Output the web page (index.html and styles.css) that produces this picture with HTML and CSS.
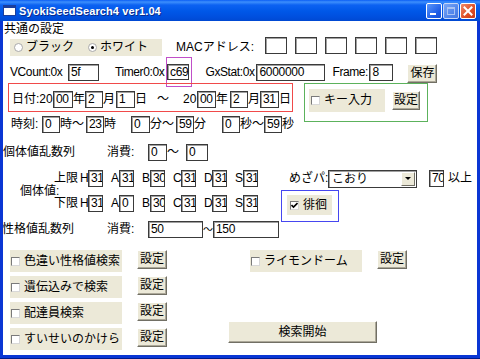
FILE: index.html
```html
<!DOCTYPE html>
<html lang="ja">
<head>
<meta charset="utf-8">
<title>SyokiSeedSearch4</title>
<link rel="stylesheet" href="styles.css">
</head>
<body>
<div class="window">
  <div class="titlebar">
    <span class="appicon"></span>
    <span class="title">SyokiSeedSearch4 ver1.04</span>
    <span class="tbtns">
      <span class="tb tb-min"><span class="min-bar"></span></span>
      <span class="tb tb-max"><span class="max-sq"></span></span>
      <span class="tb tb-close"><svg width="14" height="14" viewBox="0 0 14 14"><path d="M3.5 3.5 L10.5 10.5 M10.5 3.5 L3.5 10.5" stroke="#fff" stroke-width="2" stroke-linecap="square"/></svg></span>
    </span>
  </div>
  <div class="client">
    <div class="row row-a"><span class="lbl">共通の設定</span></div>

    <div class="row row-b">
      <div class="radios">
        <span class="opt opt1"><span class="radio"></span>ブラック</span>
        <span class="opt"><span class="radio on"></span>ホワイト</span>
      </div>
      <span class="lbl mac-lbl">MACアドレス:</span>
      <span class="box mac"></span>
      <span class="box mac"></span>
      <span class="box mac"></span>
      <span class="box mac"></span>
      <span class="box mac"></span>
      <span class="box mac"></span>
    </div>

    <div class="row row-c">
      <span class="lbl lat vc-l">VCount:0x</span>
      <span class="box w31">5f</span>
      <span class="lbl lat t0-l">Timer0:0x</span>
      <span class="hl-magenta"><span class="box w31">c69</span></span>
      <span class="lbl lat gx-l">GxStat:0x</span>
      <span class="box w69">6000000</span>
      <span class="lbl lat fr-l">Frame:</span>
      <span class="box w24">8</span>
      <span class="btn btn-save">保存</span>
    </div>

    <div class="block-d">
      <div class="dcol">
        <div class="datebox">
          <span class="lbl d-l1">日付:20</span>
          <span class="box w20">00</span>
          <span class="lbl w12">年</span>
          <span class="box w18">2</span>
          <span class="lbl w13">月</span>
          <span class="box w19">1</span>
          <span class="lbl w22">日</span>
          <span class="lbl w26">～</span>
          <span class="lbl w14">20</span>
          <span class="box w19">00</span>
          <span class="lbl w14">年</span>
          <span class="box w18">2</span>
          <span class="lbl w12">月</span>
          <span class="box w19">31</span>
          <span class="lbl d-last">日</span>
        </div>
        <div class="row timerow">
          <span class="lbl tm-l1">時刻:</span>
          <span class="box w18">0</span>
          <span class="lbl w26">時～</span>
          <span class="box w18">23</span>
          <span class="lbl w27">時</span>
          <span class="box w19">0</span>
          <span class="lbl w26">分～</span>
          <span class="box w18">59</span>
          <span class="lbl w28">分</span>
          <span class="box w18">0</span>
          <span class="lbl w24">秒～</span>
          <span class="box w18">59</span>
          <span class="lbl">秒</span>
        </div>
      </div>
      <div class="greenbox">
        <span class="chkgrp chk-key"><span class="chk"></span>キー入力</span>
        <span class="btn btn-key">設定</span>
      </div>
    </div>

    <div class="row row-e">
      <span class="lbl w104">個体値乱数列</span>
      <span class="lbl w41">消費:</span>
      <span class="box w19">0</span>
      <span class="lbl w19">～</span>
      <span class="box w22">0</span>
    </div>

    <div class="block-f">
      <span class="lbl iv-l">個体値:</span>
      <div class="iv-rows">
        <div class="ivrow">
          <span class="lbl lim">上限</span>
          <span class="lbl gl">H</span><span class="box w15">31</span>
          <span class="lbl gl gsp">A</span><span class="box w15">31</span>
          <span class="lbl gl gsp">B</span><span class="box w15">30</span>
          <span class="lbl gl gsp">C</span><span class="box w15">31</span>
          <span class="lbl gl gsp">D</span><span class="box w15">31</span>
          <span class="lbl gl gsp">S</span><span class="box w15">31</span>
          <span class="lbl mz-l">めざパ:</span>
          <span class="select"><span class="sel-text">こおり</span><span class="sel-btn"><span class="tri"></span></span></span>
          <span class="box w15 b70">70</span>
          <span class="lbl ijo">以上</span>
        </div>
        <div class="ivrow">
          <span class="lbl lim">下限</span>
          <span class="lbl gl">H</span><span class="box w15">31</span>
          <span class="lbl gl gsp">A</span><span class="box w15">0</span>
          <span class="lbl gl gsp">B</span><span class="box w15">30</span>
          <span class="lbl gl gsp">C</span><span class="box w15">31</span>
          <span class="lbl gl gsp">D</span><span class="box w15">31</span>
          <span class="lbl gl gsp">S</span><span class="box w15">31</span>
          <div class="bluebox">
            <span class="chkgrp chk-hai"><span class="chk on"><svg width="7" height="7" viewBox="0 0 7 7"><path d="M0.5 3 L2.5 5 L6.5 1" stroke="#000" stroke-width="1.6" fill="none"/></svg></span>徘徊</span>
          </div>
        </div>
      </div>
    </div>

    <div class="row row-g">
      <span class="lbl g-l1">性格値乱数列</span>
      <span class="lbl w41">消費:</span>
      <span class="box w55">50</span>
      <span class="lbl tilde-s">～</span>
      <span class="box w66">150</span>
    </div>

    <div class="sec-h">
      <div class="ck-row"><span class="chkgrp ck-l"><span class="chk"></span>色違い性格値検索</span><span class="btn btn-set">設定</span></div>
      <div class="ck-row r-lm"><span class="chkgrp ck-r"><span class="chk"></span>ライモンドーム</span><span class="btn btn-set">設定</span></div>
      <div class="ck-row r2"><span class="chkgrp ck-l"><span class="chk"></span>遺伝込みで検索</span><span class="btn btn-set">設定</span></div>
      <div class="ck-row r3"><span class="chkgrp ck-l"><span class="chk"></span>配達員検索</span><span class="btn btn-set">設定</span></div>
      <div class="ck-row r4"><span class="chkgrp ck-l"><span class="chk"></span>すいせいのかけら</span><span class="btn btn-set">設定</span></div>
      <span class="btn btn-start">検索開始</span>
    </div>
  </div>
</div>
</body>
</html>
```
FILE: styles.css
```css
* { box-sizing: border-box; }
body { margin: 0; font-family: "Liberation Sans", "Noto Sans CJK JP", sans-serif; font-size: 12px; color: #000; background: #fff; }

.window { width: 480px; height: 359px; background: #0a36d4; display: flex; flex-direction: column; border-bottom: 1px solid #001a8c; }

.titlebar { height: 21px; flex: none; display: flex; align-items: center; padding-left: 3px;
  background: linear-gradient(to bottom, #0b5ef5 0px, #3d8ffc 2px, #0c62f2 5px, #0058e8 11px, #004fde 17px, #0049d2 21px); }
.appicon { width: 13px; height: 11px; background: #fff; border: 1px solid #1b3e9c; border-top-width: 3px; flex: none; }
.title { margin-left: 3px; color: #fff; font: bold 11px "Liberation Sans", sans-serif; letter-spacing: 0.1px; text-shadow: 1px 1px 0 #0b2a8a; white-space: nowrap; }
.tbtns { margin-left: auto; margin-right: 4px; display: flex; gap: 1px; }
.tb { width: 16px; height: 16px; border: 1px solid #fff; border-radius: 2px; display: flex; align-items: center; justify-content: center; position: relative; }
.tb-min { background: linear-gradient(135deg, #5a97fb, #1c5be6 70%, #1b52d0); }
.min-bar { position: absolute; left: 3px; bottom: 3px; width: 6px; height: 2px; background: #fff; }
.tb-max { background: linear-gradient(135deg, #7aa6f5, #4d82ea 70%, #4a79dd); border-color: #c7d7f7; }
.max-sq { width: 8px; height: 8px; border: 1px solid #a8c2f3; border-top-width: 2px; }
.tb-close { background: linear-gradient(135deg, #f08a68, #de4e25 60%, #c63c16); }

.client { flex: 1; margin: 0 3px 3px 3px; background: #fff; overflow: hidden; position: relative; }

.row { display: flex; align-items: center; }
.lbl { white-space: nowrap; flex: none; line-height: 17px; }
.lat { letter-spacing: -0.4px; }
.box { flex: none; height: 17px; background: #fff; border: 1px solid #3a3a3a; box-shadow: inset 1px 1px 0 #a0a0a0; line-height: 14px; padding-left: 2px; white-space: nowrap; overflow: hidden; letter-spacing: -0.3px; }

.w12 { width: 12px; } .w13 { width: 13px; } .w14 { width: 14px; } .w15 { width: 15px; }
.w18 { width: 18px; } .w19 { width: 19px; } .w20 { width: 20px; } .w22 { width: 22px; }
.w24 { width: 24px; } .w26 { width: 26px; } .w27 { width: 27px; } .w28 { width: 28px; }
.w31 { width: 31px; } .w41 { width: 41px; } .w55 { width: 55px; } .w66 { width: 66px; } .w69 { width: 69px; } .w104 { width: 104px; }

.btn { flex: none; background: #ece9d8; border: 1px solid; border-color: #fff #716f64 #716f64 #fff; box-shadow: inset -1px -1px 0 #aca899; display: flex; align-items: center; justify-content: center; line-height: 15px; white-space: nowrap; }

.row-a { height: 17px; padding-left: 1px; }

.row-b { height: 23px; align-items: flex-start; }
.radios { margin: 1px 0 0 7px; width: 152px; height: 17px; background: #ece9d8; display: flex; align-items: center; padding-left: 4px; flex: none; }
.opt { display: flex; align-items: center; line-height: 17px; }
.opt1 { width: 74px; }
.radio { width: 9px; height: 9px; border-radius: 50%; border: 1px solid #a9a9a9; background: #fff; margin-right: 3px; position: relative; flex: none; }
.radio.on::after { content: ""; position: absolute; left: 2px; top: 2px; width: 3px; height: 3px; border-radius: 50%; background: #000; }
.mac-lbl { margin: 1px 0 0 14px; width: 89px; }
.mac { width: 22px; margin-right: 8px; margin-top: -1px; }

.row-c { height: 22px; }
.vc-l { margin-left: 7px; width: 58px; }
.t0-l { margin-left: 16px; width: 51px; }
.hl-magenta { flex: none; border: 1px solid #c04fc8; padding: 7px 2px 7px 0; }
.gx-l { margin-left: 13px; width: 51px; }
.fr-l { margin-left: 7px; width: 37px; }
.btn-save { margin: 3px 0 0 14px; width: 30px; height: 19px; }

.block-d { display: grid; grid-template-columns: 301px 124px; height: 51px; }
.dcol { display: flex; flex-direction: column; }
.datebox { margin-left: 5px; width: 285px; height: 29px; border: 1px solid #f04a4a; padding-top: 7px; display: flex; align-items: flex-start; }
.d-l1 { margin-left: 3px; width: 41px; }
.d-last { margin-left: 0; }
.timerow { margin-top: 4px; height: 17px; }
.tm-l1 { margin-left: 8px; width: 31px; }
.greenbox { width: 124px; height: 39px; border: 1px solid #5cb25c; display: flex; align-items: flex-start; padding: 5px 0 0 4px; }
.chkgrp { flex: none; background: #ece9d8; display: flex; align-items: center; white-space: nowrap; line-height: 17px; }
.chk-key { width: 76px; height: 23px; padding-left: 2px; }
.btn-key { margin: 2px 0 0 7px; width: 28px; height: 19px; }
.chk { width: 9px; height: 9px; background: #fff; border: 1px solid; border-color: #7a7a7a #d8d8d8 #d8d8d8 #7a7a7a; margin-right: 4px; flex: none; display: flex; align-items: center; justify-content: center; }

.row-e { margin-top: 10px; height: 17px; }

.block-f { margin-top: 9px; height: 42px; display: flex; align-items: center; }
.iv-l { margin-left: 17px; width: 34px; }
.iv-rows { display: flex; flex-direction: column; gap: 8px; }
.ivrow { display: flex; align-items: center; height: 17px; }
.lim { width: 26px; }
.gl { width: 8px; text-align: right; padding-right: 1px; }
.gsp { margin-left: 8px; }
.mz-l { margin-left: 31px; width: 39px; }
.select { flex: none; width: 89px; height: 18px; background: #fff; border: 1px solid #3a3a3a; box-shadow: inset 1px 1px 0 #a0a0a0; display: flex; }
.sel-text { flex: 1; padding-left: 3px; line-height: 16px; }
.sel-btn { width: 14px; margin: 1px; background: #ece9d8; border: 1px solid; border-color: #fff #716f64 #716f64 #fff; display: flex; align-items: center; justify-content: center; }
.tri { width: 0; height: 0; border-left: 3px solid transparent; border-right: 3px solid transparent; border-top: 3px solid #000; }
.b70 { margin-left: 12px; }
.ijo { margin-left: 4px; }
.bluebox { flex: none; align-self: flex-start; margin: -5px 0 0 23px; width: 58px; height: 32px; border: 1px solid #4646f0; padding: 4px 0 0 5px; }
.chk-hai { width: 45px; height: 20px; padding-left: 3px; }

.row-g { margin-top: 9px; height: 17px; }
.g-l1 { margin-left: -1px; width: 105px; }
.tilde-s { width: 10px; font-size: 10px; text-align: center; }

.sec-h { margin-top: 12px; display: grid; grid-template-columns: 225px 1fr; grid-template-rows: repeat(4, 22px); row-gap: 4px; }
.ck-row { display: flex; align-items: flex-start; }
.ck-row.r2 { grid-column: 1; grid-row: 2; }
.ck-row.r3 { grid-column: 1; grid-row: 3; }
.ck-row.r4 { grid-column: 1; grid-row: 4; }
.ck-row.r-lm { grid-column: 2; grid-row: 1; }
.ck-l { margin-left: 7px; width: 112px; height: 22px; padding-left: 1px; }
.ck-r { margin-left: 22px; width: 112px; height: 22px; padding-left: 1px; }
.btn-set { margin-left: 15px; width: 30px; height: 19px; }
.btn-start { grid-column: 2; grid-row: 3 / 5; align-self: end; margin-bottom: 7px; width: 149px; height: 22px; }
```
